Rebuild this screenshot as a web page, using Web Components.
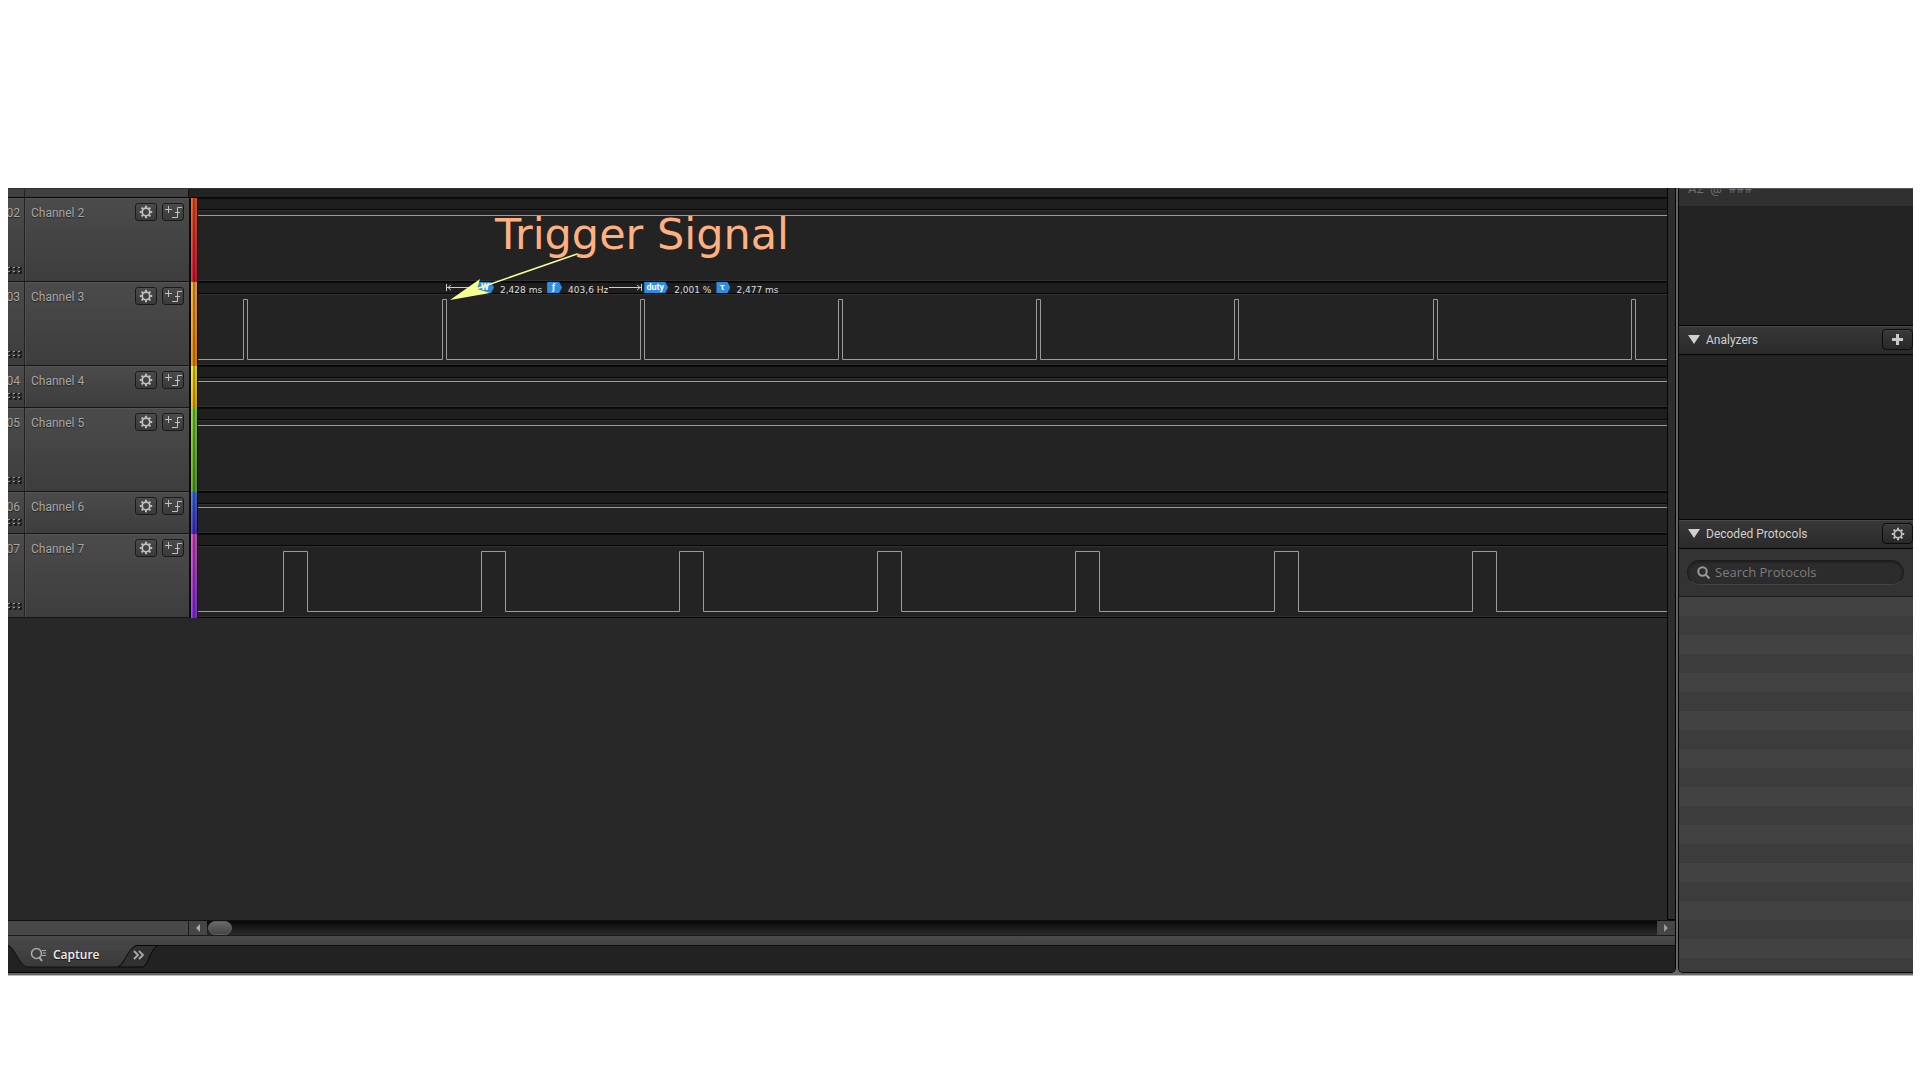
<!DOCTYPE html>
<html lang="en">
<head>
<meta charset="utf-8">
<title>Logic capture</title>
<style>
  html, body { margin: 0; height: 100%; background: #fff; }
  body { box-sizing: border-box; padding: 188px 7px 104px 8px; font-family: Roboto, "Liberation Sans", sans-serif; font-size: 12px; line-height: 16px; }
</style>
</head>
<body>
<logic-app></logic-app>
<script>
const GEAR = `<svg width="14" height="14" viewBox="0 0 14 14" aria-hidden="true"><g stroke="currentColor" fill="none"><circle cx="7" cy="7" r="3.8" stroke-width="1.8"/><path stroke-width="2" d="M7 .8v2M7 11.200v2M.8 7h2M11.200 7h2M2.600 2.600l1.400 1.400M10 10l1.400 1.400M11.400 2.600L10 4M4 10l-1.400 1.400"/></g></svg>`;

function define(name, html) {
  customElements.define(name, class extends HTMLElement {
    connectedCallback() {
      if (this.shadowRoot) return;
      const root = this.attachShadow({ mode: 'open' });
      const t = document.createElement('template');
      t.innerHTML = typeof html === 'function' ? html(this) : html;
      root.append(t.content.cloneNode(true));
    }
  });
}

define('icon-button', el => `
<style>
  :host { display: block; width: 22px; height: 18px; color: #c0c0c0; }
  button { width: 100%; height: 100%; box-sizing: border-box; padding: 0; display: flex; align-items: center; justify-content: center;
    border: 1px solid #1a1a1a; border-radius: 3px; color: inherit; background: linear-gradient(#4a4a4a, #3a3a3a); box-shadow: inset 0 1px #5555; }
  :host([dark]) { width: 31px; height: 21px; }
  :host([dark]) button { border-color: #0c0c0c; background: linear-gradient(#3a3a3a, #282828); border-radius: 4px; }
</style>
<button type="button" aria-label="${el.getAttribute('label')}"><slot></slot></button>`);

define('channel-label', el => `
<style>
  :host { display: flex; width: 181px; flex: none; box-sizing: border-box; border-bottom: 1px solid #161616; background: linear-gradient(#4b4b4b, #3d3d3d); box-shadow: inset 0 1px #555; color: #a8a8a8; text-shadow: 0 1px 1px #222; }
  .num { width: 17px; box-sizing: border-box; border-right: 1px solid #222; padding: 7px 0; display: flex; flex-direction: column; justify-content: space-between; align-items: flex-end; overflow: hidden; box-shadow: 1px 0 #505050; }
  .num span { padding-right: 4px; }
  .num svg { padding-right: 2px; flex: none; }
  .main { flex: 1; display: flex; align-items: flex-start; padding: 5px 5px 0 6px; }
  .name { flex: 1; padding-top: 2px; }
  icon-button + icon-button { margin-left: 5px; }
</style>
<div class="num"><span>${el.getAttribute('num')}</span>
<svg width="14" height="7" viewBox="0 0 14 7"><g fill="#1d1d1d"><path d="M1 0h3v3H1zM6 0h3v3H6zM11 0h3v3h-3zM1 4h3v3H1zM6 4h3v3H6zM11 4h3v3h-3z"/></g><g fill="#999"><path d="M0 0h2v1H0zM5 0h2v1H5zM10 0h2v1h-2zM0 4h2v1H0zM5 4h2v1H5zM10 4h2v1h-2z"/></g></svg></div>
<div class="main"><span class="name"><slot></slot></span>
<icon-button label="Channel settings">${GEAR}</icon-button>
<icon-button label="Add trigger"><svg width="18" height="14" viewBox="0 0 18 14" fill="none" stroke="#c0c0c0"><path d="M1 4.500h7M4.500 1v7M8 12.500h5.500V2.500H18M11 7.500h5"/></svg></icon-button></div>`);

define('wave-plot', el => {
  const k = el.getAttribute('kind'), lv = el.getAttribute('level') || 17;
  let d;
  if (k === 'flat') d = `M0 ${lv}.5H4000`;
  else {
    const [start, width, period] = k === 'narrow' ? [45.4, 4, 198.2] : [85, 24, 198.1];
    d = 'M0 77.5';
    for (let i = 0; i < 16; i++) { const x = Math.round(start + i * period) + .5; d += `H${x}V17.5H${x + width}V77.5`; }
  }
  return `
<style>
  :host { display: block; position: relative; flex: 1; min-width: 0; box-sizing: border-box; background: #232323; border-bottom: 1px solid #060606; box-shadow: inset 0 -1px #303030; }
  .bar { height: 10px; background: #1e1e1e; border-top: 1px solid #0b0b0b; border-bottom: 1px solid #060606; box-shadow: 0 1px #303030; }
  svg { position: absolute; left: 0; top: 0; width: 100%; height: 100%; }
</style>
<div class="bar"></div><svg aria-hidden="true"><path d="${d}" fill="none" stroke="#9b9b9b"/></svg><slot></slot>`;
});

define('channel-row', el => `
<style>
  :host { display: flex; height: ${el.getAttribute('size') === 'small' ? 42 : 84}px; flex: none; }
  .strip { width: 9px; flex: none; box-sizing: border-box; border: solid #0a0a0a; border-width: 0 1px 0 2px; background: linear-gradient(90deg, #fff2 0 1px, transparent 1px 2px, #0005 2px 4px, #0002 4px), linear-gradient(${el.getAttribute('colors')}); }
</style>
<channel-label num="${el.getAttribute('num')}">${el.getAttribute('name')}</channel-label>
<div class="strip"></div>
<wave-plot kind="${el.getAttribute('kind')}" level="${el.getAttribute('level') || 17}"><slot></slot></wave-plot>`);

define('value-tag', `
<style>
  :host { display: flex; justify-content: center; height: 11px; padding-right: 2px; background: #2f8de0; color: #fff; font: bold 9px/11px Roboto, "DejaVu Sans", sans-serif; clip-path: polygon(0 0, calc(100% - 3px) 0, 100% 50%, calc(100% - 3px) 100%, 0 100%); box-sizing: border-box; white-space: nowrap; }
</style><slot></slot>`);

define('pulse-readout', `
<style>
  :host { position: absolute; left: 248px; top: 0; display: flex; align-items: flex-start; white-space: nowrap; color: #ddd; font: 9px/16px "DejaVu Sans", sans-serif; }
  svg { flex: none; }
  .w { width: 16px; } .f { width: 15px; } .d { width: 24px; } .t { width: 14px; }
  .val { padding: 0 5px 0 6px; }
  .val.hz { padding-right: 1px; }
</style>
<svg width="32" height="12" fill="none" stroke="#ccc"><path d="M.5 2v7M1 5.500h31M5 3L2 5.500l3 2.500"/></svg>
<value-tag class="w">W</value-tag><span class="val">2,428 ms</span>
<value-tag class="f">ƒ</value-tag><span class="val hz">403,6 Hz</span>
<svg width="35" height="12" fill="none" stroke="#ccc"><path d="M0 5.500h32M32.500 2v7M28 3l3 2.500-3 2.500"/></svg>
<value-tag class="d">duty</value-tag><span class="val">2,001 %</span>
<value-tag class="t">τ</value-tag><span class="val">2,477 ms</span>`);

define('trigger-note', `
<style>
  :host { position: absolute; z-index: 2; left: 252px; top: 7px; color: #ffb080; font: 43px/58px "DejaVu Sans", sans-serif; white-space: nowrap; }
  .text { padding-left: 45px; }
  svg { position: absolute; left: 0; top: 47px; }
</style>
<svg width="140" height="50"><path d="M26 37L127 2" stroke="#f6ff93" stroke-width="1.500"/><path d="M0 48L30 27l-3 10 13 4z" fill="#f6ff93"/></svg>
<div class="text">Trigger Signal</div>`);

define('scroll-bar', `
<style>
  :host { display: flex; height: 16px; flex: none; border-top: 1px solid #111; border-bottom: 1px solid #1b1b1b; box-sizing: border-box; }
  .left { width: 181px; box-sizing: border-box; background: #484848; border-right: 1px solid #191919; flex: none; }
  button { width: 18px; flex: none; padding: 0; border: 0; background: #454545; display: flex; align-items: center; justify-content: center; }
  .track { flex: 1; background: linear-gradient(#080808, #2b2b2b); }
  .thumb { width: 24px; height: 14px; box-sizing: border-box; border-radius: 7px; margin-left: 1px; background: linear-gradient(#686868, #464646); border: 1px solid #606060; }
</style>
<div class="left"></div>
<button type="button" aria-label="Scroll left"><svg width="6" height="10"><path d="M5 1v8L1 5z" fill="#aaa"/></svg></button>
<div class="track"><div class="thumb"></div></div>
<button type="button" aria-label="Scroll right"><svg width="6" height="10"><path d="M1 1v8l4-4z" fill="#999"/></svg></button>`);

define('tab-bar', `
<style>
  :host { display: block; flex: none; height: 36px; background: linear-gradient(#4a4a4a, #424242) 0 0 / 100% 9px no-repeat #222; position: relative; box-sizing: border-box; }
  .edge { position: absolute; inset: 0; width: 100%; height: 36px; }
  .tabs { position: relative; display: flex; padding-top: 8px; height: 21px; align-items: center; }
  button { display: flex; align-items: center; padding: 0; border: 0; background: none; }
  .cap { margin-left: 22px; color: #eee; font: 600 12px/20px "Open Sans", sans-serif; text-shadow: 0 1px 1px #111; gap: 5px; }
  .more { margin-left: 33px; }
</style>
<svg class="edge" aria-hidden="true"><defs><linearGradient id="g" x2="0" y2="1"><stop stop-color="#454545"/><stop offset="1" stop-color="#393939"/></linearGradient></defs>
<path d="M0 9.500H4000" stroke="#0d0d0d"/>
<path d="M110 31C117 28 119 13 128 9.500H150C142 13 141 28 135 31Z" fill="#303030" stroke="#080808"/>
<path d="M0 9C8 11 11 31 20 31H108C116 31 119 13 128 9H0Z" fill="url(#g)"/>
<path d="M0 10C8 12 11 31 20 31H108C116 31 119 13 128 9.500" fill="none" stroke="#111"/></svg>
<div class="tabs"><button type="button" class="cap"><svg width="18" height="16" fill="none" stroke="#aaa"><circle cx="6.500" cy="6.500" r="5" stroke-width="1.500"/><path d="M9 10l3 4" stroke-width="2"/><path d="M12 3.500h4M13 6h3M12 8.500h4"/></svg><span>Capture</span></button>
<button type="button" class="more" aria-label="More tabs"><svg width="12" height="10" fill="none" stroke="#aaa" stroke-width="1.800"><path d="M1 1l4 4-4 4M6 1l4 4-4 4"/></svg></button></div>`);

define('panel-header', `
<style>
  :host { display: flex; height: 30px; flex: none; box-sizing: border-box; align-items: center; border: solid #050505; border-width: 1px 0; padding: 0 0 1px 9px; background: linear-gradient(#383838, #2a2a2a); box-shadow: inset 0 1px #484848; color: #d0d0d0; }
  h2 { flex: 1; margin: 0 0 0 6px; font: inherit; }
</style>
<svg width="12" height="10"><path d="M0 0h12L6 9z" fill="#d0d0d0"/></svg><h2><slot></slot></h2><slot name="action"></slot>`);

define('search-box', `
<style>
  :host { display: flex; align-items: flex-start; height: 48px; flex: none; box-sizing: border-box; padding: 11px 9px 0 8px; background: #333; border-bottom: 1px solid #1b1b1b; }
  label { flex: 1; display: flex; align-items: center; height: 25px; box-sizing: border-box; border-radius: 13px; border: 1px solid #1e1e1e; border-bottom-color: #444; background: #2c2c2c; box-shadow: inset 0 1px 2px #1a1a1a; padding: 0 0 1px 9px; gap: 5px; }
  input { flex: 1; min-width: 0; border: 0; outline: 0; padding: 0; background: none; color: #ccc; font: 13px/20px "Open Sans", sans-serif; }
  input::placeholder { color: #7c7c7c; opacity: 1; }
</style>
<label><svg width="13" height="13" fill="none" stroke="#999" stroke-width="2"><circle cx="5.500" cy="5.500" r="4.200"/><path d="M8.500 8.500l4 4"/></svg><input type="search" placeholder="Search Protocols" aria-label="Search Protocols"></label>`);

define('side-panel', `
<style>
  :host { display: flex; flex-direction: column; width: 235px; flex: none; box-sizing: border-box; background: #232323; border: solid #050505; border-width: 0 0 1px 1px; border-bottom-left-radius: 5px; overflow: hidden; }
  .old { height: 18px; flex: none; overflow: hidden; background: #303030; color: #707070; padding-left: 9px; box-sizing: border-box; border-top: 1px solid #555; }
  .old span { display: block; font-size: 13px; margin-top: -8px; white-space: pre; }
  .gap1 { height: 119px; flex: none; } .gap2 { height: 164px; flex: none; }
  .list { flex: 1; background: repeating-linear-gradient(#424242 0 19px, #3c3c3c 19px 38px); }
</style>
<div class="old"><span>A2  @  ###</span></div>
<div class="gap1"></div>
<panel-header>Analyzers<icon-button dark slot="action" label="Add analyzer"><svg width="11" height="11"><path d="M4 0h3v4h4v3H7v4H4V7H0V4h4z" fill="#c8c8c8"/></svg></icon-button></panel-header>
<div class="gap2"></div>
<panel-header>Decoded Protocols<icon-button dark slot="action" label="Protocol settings">${GEAR}</icon-button></panel-header>
<search-box></search-box>
<div class="list"></div>`);

define('logic-app', `
<style>
  :host { display: flex; flex-direction: column; height: 100%; background: #666; overflow: hidden; }
  .body { flex: 1; display: flex; min-height: 0; gap: 2px; }
  .left { flex: 1; min-width: 0; display: flex; flex-direction: column; border: solid #050505; border-width: 0 1px 1px 0; border-bottom-right-radius: 5px; overflow: hidden; background: #232323; }
  .work { flex: 1; display: flex; min-height: 0; background: #282828; }
  .rows { flex: 1; min-width: 0; display: flex; flex-direction: column; }
  .gutter { width: 8px; box-sizing: border-box; border-left: 1px solid #050505; border-bottom: 1px solid #050505; background: #2d2d2d; }
  .previous { height: 10px; flex: none; display: flex; border-top: 1px solid #333; border-bottom: 1px solid #080808; box-sizing: border-box; }
  .previous i { width: 180px; background: linear-gradient(90deg, #404040 16px, #222 16px 17px, #404040 17px); border-right: 1px solid #111; }
  .previous b { width: 9px; background: #222; }
  .previous u { flex: 1; background: #232323; }
  .foot { height: 3px; flex: none; border-bottom: 1px solid #bbb; box-sizing: border-box; }
</style>
<div class="body">
  <div class="left">
    <div class="work">
      <div class="rows">
        <div class="previous"><i></i><b></b><u></u></div>
        <channel-row num="02" name="Channel 2" kind="flat" colors="#f15a24, #e0183c"><trigger-note></trigger-note></channel-row>
        <channel-row num="03" name="Channel 3" kind="narrow" colors="#fbb03b, #f58e00"><pulse-readout></pulse-readout></channel-row>
        <channel-row num="04" name="Channel 4" kind="flat" level="15" size="small" colors="#f7ea33, #f5b400"></channel-row>
        <channel-row num="05" name="Channel 5" kind="flat" colors="#8cd840, #5dab24"></channel-row>
        <channel-row num="06" name="Channel 6" kind="flat" level="15" size="small" colors="#3a7be0, #4c2fd0"></channel-row>
        <channel-row num="07" name="Channel 7" kind="wide" colors="#dc50c8, #8c32e6"></channel-row>
      </div>
      <div class="gutter"></div>
    </div>
    <scroll-bar></scroll-bar>
    <tab-bar></tab-bar>
  </div>
  <side-panel></side-panel>
</div>
<div class="foot"></div>`);
</script>
</body>
</html>
